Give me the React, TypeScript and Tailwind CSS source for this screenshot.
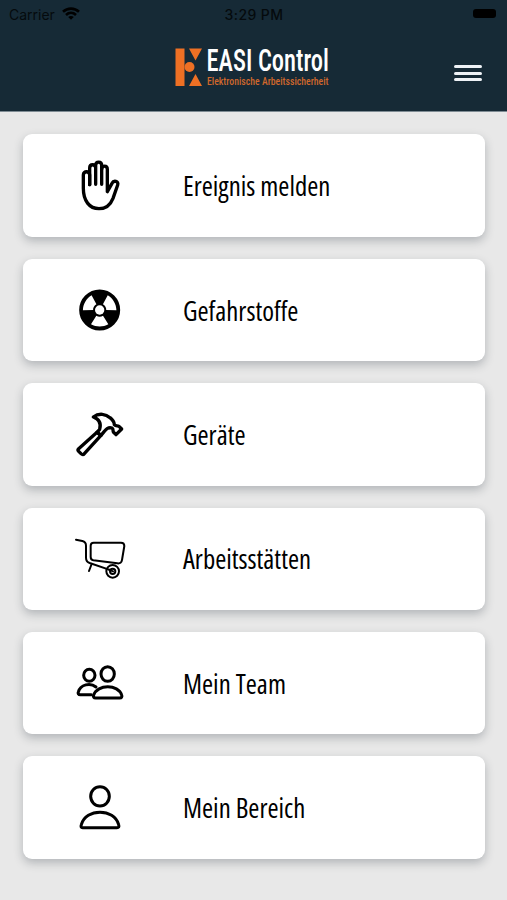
import React from 'react';

interface MenuItem {
  label: string;
  icon: React.ReactNode;
}

interface IconProps {
  children: React.ReactNode;
  strokeWidth?: number;
  viewBox?: string;
}

const Icon: React.FC<IconProps> = ({ children, strokeWidth = 9, viewBox = '0 0 180 180' }) => (
  <svg
    viewBox={viewBox}
    className="block h-[60px] w-[60px] shrink-0 overflow-visible"
    fill="none"
    stroke="#000"
    strokeWidth={strokeWidth}
    strokeLinecap="round"
    strokeLinejoin="round"
    aria-hidden="true"
  >
    {children}
  </svg>
);

const HandIcon = () => (
  <Icon viewBox="0 18 180 180" strokeWidth={10}>
    <path d="M59 104V75c0-13-19-13-19 0v40c0 37 18 61 47 61 24 0 35-13 42-31l14-40c4-12-12-15-17-5l-14 25V58c0-13-17-13-17 0" />
    <path d="M59 104V54c0-13 18-13 18 0v49M77 54v-8c0-13 18-13 18 0v57" />
  </Icon>
);

const RadiationIcon = () => (
  <Icon>
    <circle cx="89" cy="90" r="57" fill="#000" />
    <g fill="#fff" stroke="none">
      <path d="M79 107l-16 26c16 9 36 9 52 0l-16-26c-6 4-14 4-20 0z" />
      <path d="M79 107l-16 26c16 9 36 9 52 0l-16-26c-6 4-14 4-20 0z" transform="rotate(120 89 90)" />
      <path d="M79 107l-16 26c16 9 36 9 52 0l-16-26c-6 4-14 4-20 0z" transform="rotate(240 89 90)" />
      <circle cx="89" cy="90" r="14" />
    </g>
  </Icon>
);

const HammerIcon = () => (
  <Icon viewBox="0 -1 180 180" strokeWidth={10}>
    <path d="M81 84L26 133c-3 3-3 5 0 8l7 7c4 4 7 4 10 0l50-55z" />
    <path d="M81 84l8-9c5-18-2-31-19-37 17-13 38-9 50 2 10 8 13 14 13 21 5 6 9 2 14 5l8 8-17 17-8-8c-2-5 1-8-4-12-12-3-17 3-23 10l-10 12z" />
  </Icon>
);

const BarrowIcon = () => (
  <Icon strokeWidth={6} viewBox="0 -3 180 180">
    <path d="M18 29l19 4c8 2 11 5 11 14v36c0 9 3 13 11 16l58 20" />
    <path d="M71 38h82c7 0 10 3 10 10l-7 42c-1 8-6 11-14 10l-72-9c-6-1-8-5-8-10V47c0-6 3-9 9-9z" />
    <path d="M65 102l-8 21" />
    <circle cx="128" cy="124" r="19" />
    <circle cx="128" cy="124" r="8" />
    <path d="M117 119l12 5" />
  </Icon>
);

const TeamIcon = () => (
  <Icon viewBox="0 -5 180 180">
    <ellipse cx="58" cy="62" rx="17" ry="18" />
    <ellipse cx="113" cy="58" rx="20" ry="22" />
    <path d="M64 120H31c-6 0-8-4-6-8 6-23 36-29 53-15" />
    <path d="M77 130h72c6 0 8-4 6-9-10-33-73-33-84 0-2 5 0 9 6 9z" />
  </Icon>
);

const PersonIcon = () => (
  <Icon viewBox="0 -7 180 180">
    <ellipse cx="90" cy="48" rx="28" ry="29" />
    <path d="M38 142h103c5 0 7-3 5-9-13-50-99-50-112 0-2 6-1 9 4 9z" />
  </Icon>
);

const menuItems: MenuItem[] = [
  { label: 'Ereignis melden', icon: <HandIcon /> },
  { label: 'Gefahrstoffe', icon: <RadiationIcon /> },
  { label: 'Geräte', icon: <HammerIcon /> },
  { label: 'Arbeitsstätten', icon: <BarrowIcon /> },
  { label: 'Mein Team', icon: <TeamIcon /> },
  { label: 'Mein Bereich', icon: <PersonIcon /> },
];

const Logo = () => (
  <svg viewBox="0 0 156 44" className="block h-[44px] w-[156px] overflow-visible" role="img" aria-label="EASI Control">
    <g fill="#ee7024">
      <path d="M-.500 2.500h9V40h-9zM13 2.500h13l-6.500 12zM19.500 28L26 40H13z" />
      <circle cx="13.500" cy="21" r="5" />
    </g>
    <text
      x="30.500"
      y="25"
      fill="#fff"
      fontSize="31"
      textLength="122.500"
      lengthAdjust="spacingAndGlyphs"
      className="font-['Roboto','Liberation_Sans',sans-serif] font-medium [font-stretch:75%]"
    >
      EASI Control
    </text>
    <text
      x="31"
      y="39"
      fill="#cf672c"
      fontSize="11.500"
      textLength="121.500"
      lengthAdjust="spacingAndGlyphs"
      className="font-['Roboto','Liberation_Sans',sans-serif] font-medium [font-stretch:75%]"
    >
      Elektronische Arbeitssicherheit
    </text>
  </svg>
);

const StatusBar = () => (
  <div className="grid h-7 grid-cols-3 items-center pr-[11px] pl-[9px] font-['Inter','Liberation_Sans',sans-serif] text-[14px] text-[#050a0d]">
    <div className="flex items-center gap-[7px]">
      <span>Carrier</span>
      <svg viewBox="0 0 18 13" className="mt-[-2px] h-[13px] w-[18px]" fill="none" stroke="#000" strokeWidth="2.600">
        <path d="M1 4.800c4.500-4.300 11.500-4.300 16 0M4 8c3-2.800 7-2.800 10 0" />
        <path d="M9 12.800L6.200 10c1.600-1.400 4-1.400 5.600 0z" fill="#000" stroke="none" />
      </svg>
    </div>
    <span className="pl-[3px] text-center font-medium tracking-[0.4px]">3:29 PM</span>
    <div className="flex justify-end">
      <span className="mt-[-2px] h-[9px] w-[23px] rounded-[3px] bg-black" />
    </div>
  </div>
);

const Header = () => (
  <header className="h-28 border-b border-[#7f8c94] bg-[#162a36]">
    <StatusBar />
    <div className="grid grid-cols-[1fr_156px_1fr] pt-[18px]">
      <span />
      <Logo />
      <button type="button" aria-label="Menü" className="mt-[19px] mr-[25px] flex h-[16px] w-[28px] flex-col justify-between justify-self-end">
        <span className="h-[3px] w-full rounded-sm bg-[#eef2f6]" />
        <span className="h-[3px] w-full rounded-sm bg-[#eef2f6]" />
        <span className="h-[3px] w-full rounded-sm bg-[#eef2f6]" />
      </button>
    </div>
  </header>
);

export default function App() {
  return (
    <div className="h-[900px] w-[507px] overflow-hidden bg-[#e8e8e8]">
      <Header />
      <main className="flex flex-col gap-[21.900px] px-[23px] pt-[22.400px]">
        {menuItems.map((item) => (
          <button
            key={item.label}
            type="button"
            className="flex h-[102.500px] w-[462px] items-center rounded-[9px] bg-white pl-[47px] text-left shadow-[0_4px_10px_rgba(40,50,60,0.28)]"
          >
            {item.icon}
            <span className="mt-[2px] ml-[53px] font-['Open_Sans','Noto_Sans',sans-serif] text-[26.800px] leading-none whitespace-nowrap text-black [font-stretch:75%]">
              {item.label}
            </span>
          </button>
        ))}
      </main>
    </div>
  );
}
